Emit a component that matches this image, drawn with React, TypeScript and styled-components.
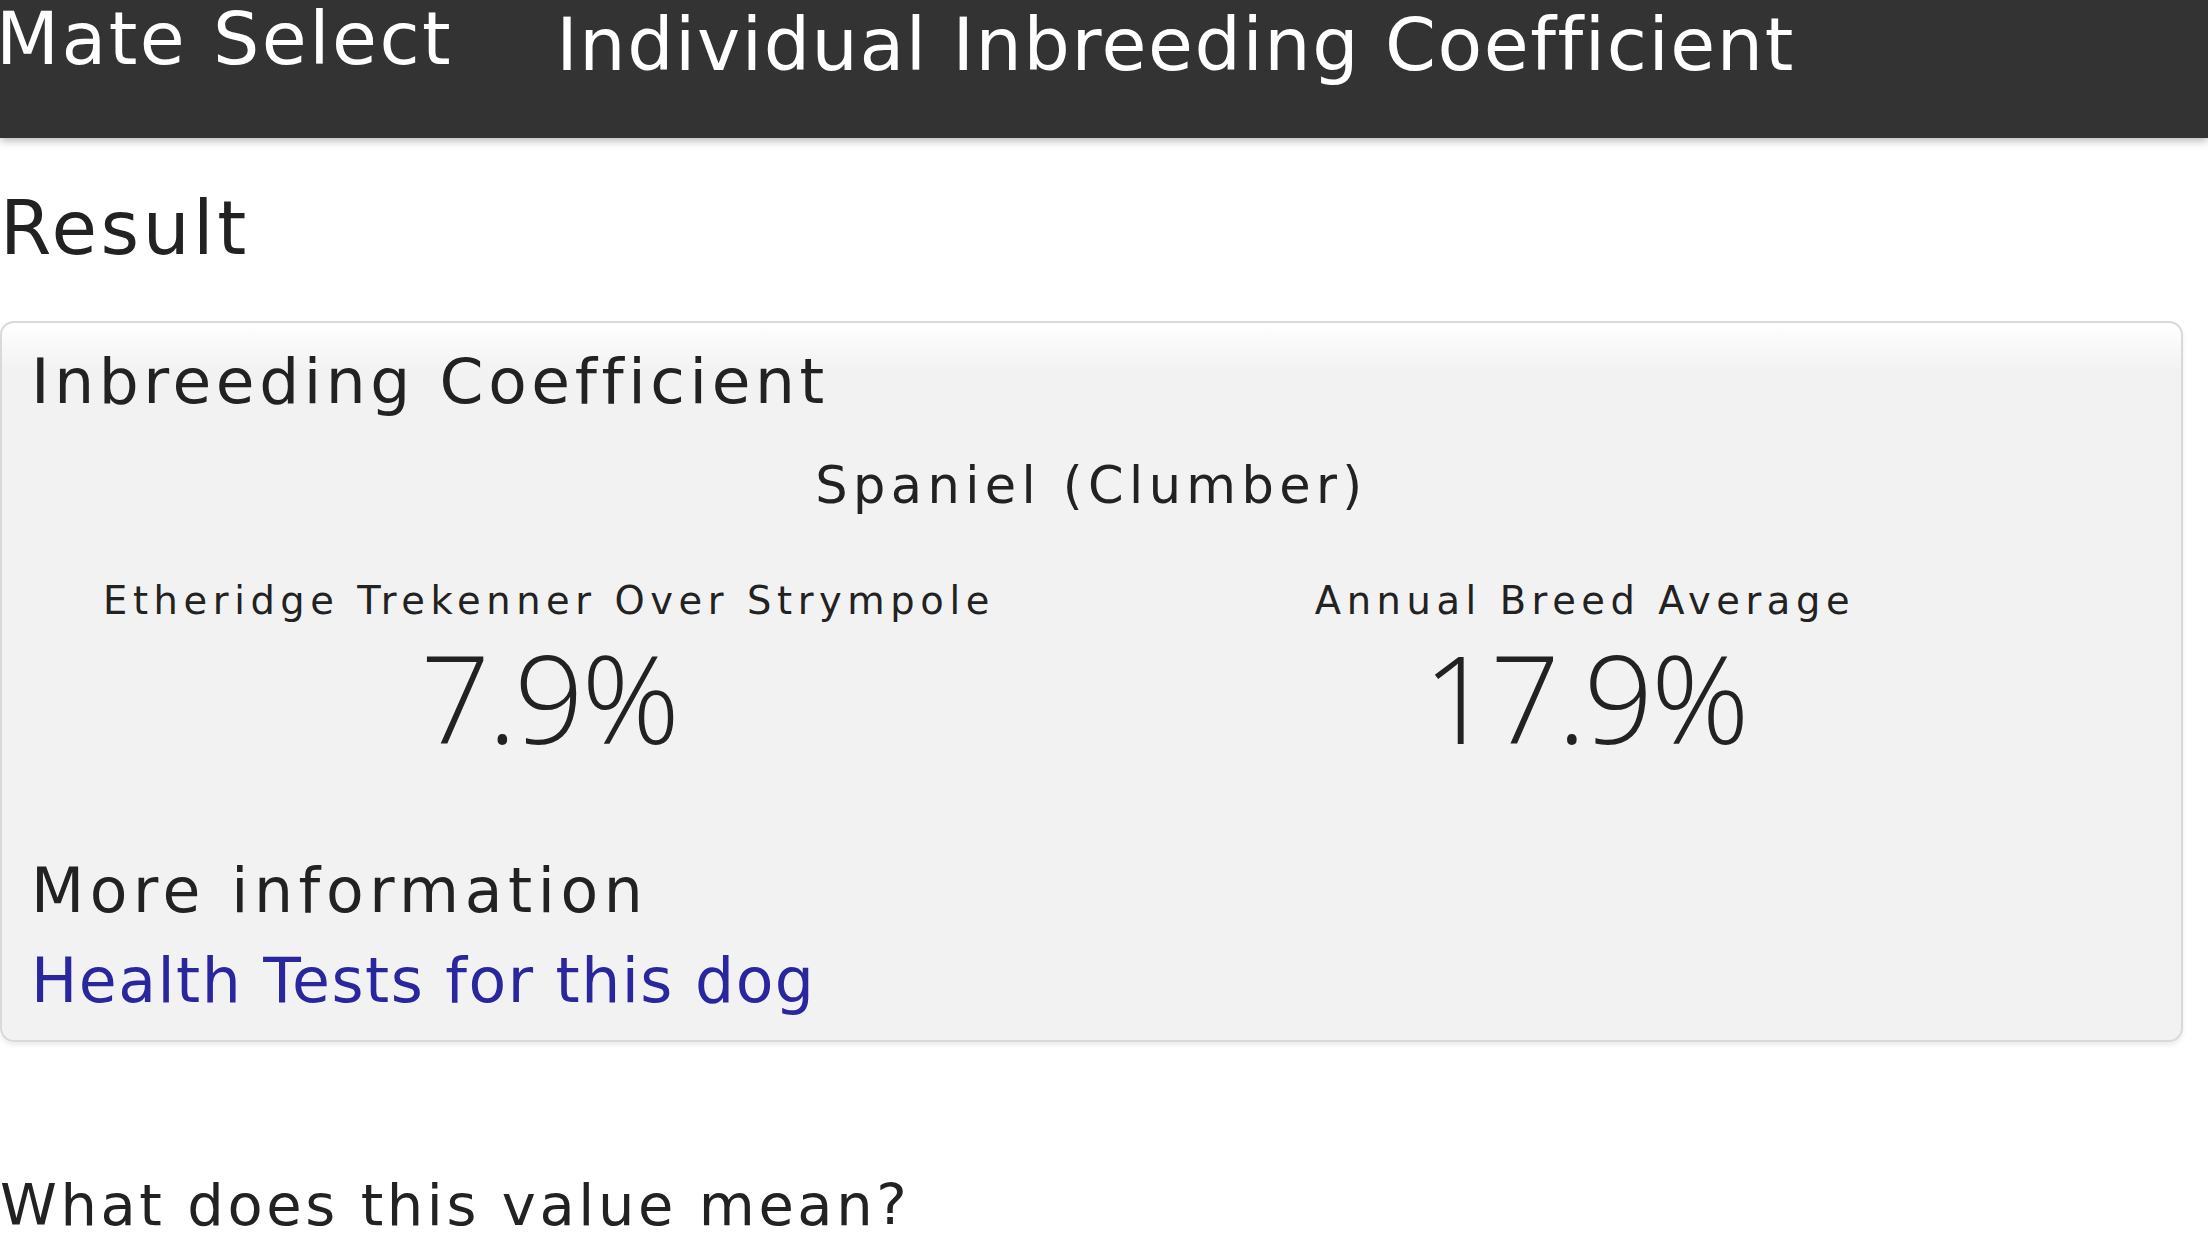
import React from 'react';
import styled, { createGlobalStyle } from 'styled-components';

const GlobalStyle = createGlobalStyle`
  html, body {
    margin: 0;
    padding: 0;
    background: #ffffff;
    overflow: hidden;
  }
  body {
    font-family: "DejaVu Sans", "Noto Sans", sans-serif;
    color: #222222;
  }
`;

const Page = styled.div`
  width: 2208px;
  height: 1242px;
  overflow: hidden;
`;

const TopBar = styled.header`
  height: 138px;
  background: #333333;
  display: flex;
  align-items: flex-start;
  gap: 103px;
  box-shadow: 0 3px 8px rgba(0, 0, 0, 0.28);
  position: relative;
  z-index: 1;
`;

const Brand = styled.div`
  font-size: 73px;
  line-height: 1.164;
  letter-spacing: 2.5px;
  color: #ffffff;
  margin-top: -3px;
  margin-left: -4px;
  white-space: nowrap;
`;

const PageTitle = styled.h1`
  margin: 3px 0 0;
  font-weight: 400;
  font-size: 73px;
  line-height: 1.164;
  letter-spacing: 1.6px;
  color: #ffffff;
  white-space: nowrap;
`;

const Main = styled.main`
  padding-top: 47px;
`;

const Heading = styled.h2<{ $size: number; $spacing: number }>`
  margin: 0;
  font-weight: 400;
  font-size: ${(p) => p.$size}px;
  line-height: 1.164;
  letter-spacing: ${(p) => p.$spacing}px;
  white-space: nowrap;
`;

const Card = styled.section`
  margin-top: 50px;
  width: 2183px;
  box-sizing: border-box;
  border: 2px solid #d9d9d9;
  border-radius: 14px;
  background: linear-gradient(to bottom, #ffffff 0px, #f2f2f2 48px, #f2f2f2 100%);
  box-shadow: 0 3px 5px rgba(0, 0, 0, 0.08);
  padding: 22px 0 22px 29px;
`;

const CardTitle = styled.h3`
  margin: 0;
  font-weight: 400;
  font-size: 63px;
  line-height: 1.164;
  letter-spacing: 4.6px;
  white-space: nowrap;
`;

const Breed = styled.div`
  margin-top: 38px;
  margin-left: -29px;
  text-align: center;
  font-size: 51px;
  line-height: 1.164;
  letter-spacing: 5.4px;
`;

const Stats = styled.div`
  margin-top: 63px;
  display: grid;
  grid-template-columns: 1036px 1036px;
`;

const Stat = styled.div`
  display: flex;
  flex-direction: column;
  align-items: center;
`;

const StatLabel = styled.div`
  font-size: 38.4px;
  line-height: 1.164;
  letter-spacing: 5.6px;
  white-space: nowrap;
`;

const StatValue = styled.div`
  margin-top: 12px;
  font-family: "Open Sans", "DejaVu Sans", sans-serif;
  font-weight: 300;
  font-size: 122px;
  line-height: 122px;
  letter-spacing: -2.5px;
  color: #222222;
  white-space: nowrap;
`;

const MoreTitle = styled.h3`
  margin: 98px 0 0;
  font-weight: 400;
  font-size: 61.6px;
  line-height: 1.164;
  letter-spacing: 5.6px;
  white-space: nowrap;
`;

const InfoLink = styled.a`
  display: block;
  margin-top: 19px;
  font-size: 61.6px;
  line-height: 1.164;
  letter-spacing: 1.5px;
  color: #2a279e;
  text-decoration: none;
  white-space: nowrap;
`;

const Question = styled.h3`
  margin: 131px 0 0;
  font-weight: 400;
  font-size: 57.5px;
  line-height: 1.164;
  letter-spacing: 3.6px;
  white-space: nowrap;
`;

const stats = [
  { label: 'Etheridge Trekenner Over Strympole', value: '7.9%' },
  { label: 'Annual Breed Average', value: '17.9%' },
];

export default function App() {
  return (
    <Page>
      <GlobalStyle />
      <TopBar>
        <Brand>Mate Select</Brand>
        <PageTitle>Individual Inbreeding Coefficient</PageTitle>
      </TopBar>
      <Main>
        <Heading $size={74} $spacing={3.5}>
          Result
        </Heading>
        <Card>
          <CardTitle>Inbreeding Coefficient</CardTitle>
          <Breed>Spaniel (Clumber)</Breed>
          <Stats>
            {stats.map((s) => (
              <Stat key={s.label}>
                <StatLabel>{s.label}</StatLabel>
                <StatValue>{s.value}</StatValue>
              </Stat>
            ))}
          </Stats>
          <MoreTitle>More information</MoreTitle>
          <InfoLink href="#">Health Tests for this dog</InfoLink>
        </Card>
        <Question>What does this value mean?</Question>
      </Main>
    </Page>
  );
}
